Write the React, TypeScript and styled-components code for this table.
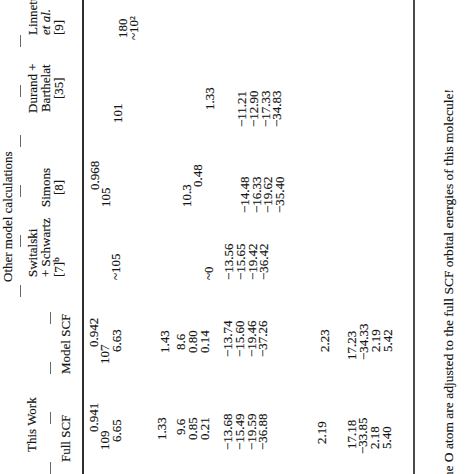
import React from 'react';
import styled, { createGlobalStyle } from 'styled-components';

const GlobalStyle = createGlobalStyle`
  html, body {
    margin: 0;
    padding: 0;
    background: #ffffff;
  }
  body {
    overflow: hidden;
  }
`;

const Frame = styled.div`
  width: 474px;
  height: 474px;
  overflow: hidden;
  background: #ffffff;
`;

// the scanned page is turned a quarter turn, so the table is laid out upright and rotated
const Sheet = styled.div`
  width: 474px;
  height: 474px;
  transform: rotate(-90deg);
  transform-origin: 50% 50%;
  display: flex;
  flex-direction: column;
  font-family: "Liberation Serif", "DejaVu Serif", serif;
  font-size: 13px;
  color: #141414;
  -webkit-text-stroke: 0.15px #141414;
`;

const Header = styled.div`
  height: 82px;
  display: flex;
`;

const ThisWorkGroup = styled.div`
  width: 177px;
  display: flex;
  flex-direction: column;
  padding-top: 25px;
  box-sizing: border-box;
`;

const OtherGroup = styled.div`
  flex: 1;
  display: flex;
  flex-direction: column;
  padding-top: 1px;
`;

const GroupTitle = styled.div<{ $indent: number }>`
  line-height: 13px;
  height: 13px;
  padding-left: ${p => p.$indent}px;
  white-space: nowrap;
`;

const DashRule = styled.div<{ $width?: number; $gap: number }>`
  height: 1px;
  margin-top: ${p => p.$gap}px;
  width: ${p => (p.$width ? `${p.$width}px` : 'auto')};
  background: repeating-linear-gradient(90deg, #6a6a6a 0 12px, transparent 12px 50px);
`;

const SubHeads = styled.div`
  display: flex;
  margin-top: 8px;
`;

const SubHead = styled.div<{ $width: number; $indent: number }>`
  width: ${p => p.$width}px;
  padding-left: ${p => p.$indent}px;
  box-sizing: border-box;
  line-height: 13px;
  white-space: nowrap;
`;

const HeadCols = styled.div`
  display: flex;
  margin-top: 5px;
`;

const HeadCol = styled.div<{ $width?: number; $indent: number }>`
  width: ${p => (p.$width ? `${p.$width}px` : 'auto')};
  flex: ${p => (p.$width ? 'none' : '1')};
  padding-left: ${p => p.$indent}px;
  box-sizing: border-box;
  display: flex;
`;

const HeadLines = styled.div<{ $center?: boolean }>`
  display: flex;
  flex-direction: column;
  align-items: ${p => (p.$center ? 'center' : 'flex-start')};
`;

const HeadLine = styled.div<{ $italic?: boolean }>`
  height: 13px;
  line-height: 13px;
  white-space: nowrap;
  font-style: ${p => (p.$italic ? 'italic' : 'normal')};
`;

const Sup = styled.span`
  font-size: 9px;
  vertical-align: 4px;
  line-height: 0;
`;

const HeavyRule = styled.div`
  height: 2px;
  background: #2e2e2e;
`;

const Body = styled.div`
  height: 329px;
  display: flex;
`;

const Column = styled.div<{ $width?: number }>`
  width: ${p => (p.$width ? `${p.$width}px` : 'auto')};
  flex: ${p => (p.$width ? 'none' : '1')};
  display: flex;
  flex-direction: column;
`;

const Cell = styled.div<{ $dx: number; $dy: number }>`
  height: 12px;
  line-height: 12px;
  white-space: nowrap;
  margin-left: ${p => p.$dx}px;
  margin-top: ${p => p.$dy}px;
`;

const BottomRule = styled.div`
  height: 2px;
  background: #4a4a4a;
`;

const Footnote = styled.div`
  margin-top: 26px;
  margin-left: -8px;
  line-height: 15px;
  white-space: nowrap;
  font-size: 13.5px;
`;

type Entry = [string, number, number]; // text, left edge, row centre

const BODY_TOP = 84;

const columns: { start: number; width?: number; cells: Entry[] }[] = [
  {
    start: 0,
    width: 90,
    cells: [
      ['0.941', 42, 94],
      ['109', 24, 105],
      ['6.65', 32, 117],
      ['1.33', 34, 162],
      ['9.6', 39, 181],
      ['0.85', 34, 193],
      ['0.21', 34, 205],
      ['−13.68', 24, 228],
      ['−15.49', 24, 240],
      ['−19.59', 24, 252],
      ['−36.88', 24, 263],
      ['2.19', 30, 322],
      ['17.18', 25, 352],
      ['−33.85', 20, 363],
      ['2.18', 25, 375],
      ['5.40', 25, 387],
    ],
  },
  {
    start: 90,
    width: 87,
    cells: [
      ['0.942', 127, 94],
      ['107', 110, 105],
      ['6.63', 122, 117],
      ['1.43', 121, 165],
      ['8.6', 124, 181],
      ['0.80', 121, 193],
      ['0.14', 121, 205],
      ['−13.74', 117, 228],
      ['−15.60', 117, 240],
      ['−19.46', 117, 252],
      ['−37.26', 117, 263],
      ['2.23', 122, 325],
      ['17.23', 114, 352],
      ['−34.33', 114, 364],
      ['2.19', 122, 376],
      ['5.42', 122, 388],
    ],
  },
  {
    start: 177,
    width: 78,
    cells: [
      ['~105', 194, 116],
      ['~0', 194, 209],
      ['−13.56', 194, 229],
      ['−15.65', 194, 241],
      ['−19.42', 194, 253],
      ['−36.42', 194, 264],
    ],
  },
  {
    start: 255,
    width: 80,
    cells: [
      ['0.968', 284, 95],
      ['105', 267, 106],
      ['10.3', 267, 187],
      ['0.48', 287, 198],
      ['−14.48', 261, 245],
      ['−16.33', 261, 257],
      ['−19.62', 261, 268],
      ['−35.40', 261, 280],
    ],
  },
  {
    start: 335,
    width: 85,
    cells: [
      ['101', 351, 118],
      ['1.33', 364, 210],
      ['−11.21', 347, 242],
      ['−12.90', 347, 254],
      ['−17.33', 347, 266],
      ['−34.83', 347, 277],
    ],
  },
  {
    start: 420,
    cells: [
      ['180', 436, 123],
      ['~10²', 434, 134],
    ],
  },
];

function DataColumn({ start, width, cells }: { start: number; width?: number; cells: Entry[] }) {
  let cursor = BODY_TOP;
  return (
    <Column $width={width}>
      {cells.map(([text, left, centre]) => {
        const dy = centre - 6 - cursor;
        cursor = centre + 6;
        return (
          <Cell key={text + centre} $dx={left - start} $dy={dy}>
            {text}
          </Cell>
        );
      })}
    </Column>
  );
}

export default function App() {
  return (
    <>
      <GlobalStyle />
      <Frame>
        <Sheet>
          <Header>
            <ThisWorkGroup>
              <GroupTitle $indent={22}>This Work</GroupTitle>
              <DashRule $width={165} $gap={12} />
              <SubHeads>
                <SubHead $width={90} $indent={12}>Full SCF</SubHead>
                <SubHead $width={87} $indent={10}>Model SCF</SubHead>
              </SubHeads>
            </ThisWorkGroup>
            <OtherGroup>
              <GroupTitle $indent={15}>Other model calculations</GroupTitle>
              <DashRule $gap={6} />
              <HeadCols>
                <HeadCol $width={78} $indent={20}>
                  <HeadLines>
                    <HeadLine>Switalski</HeadLine>
                    <HeadLine>+ Schwartz</HeadLine>
                    <HeadLine>
                      [7]<Sup>b</Sup>
                    </HeadLine>
                  </HeadLines>
                </HeadCol>
                <HeadCol $width={80} $indent={12}>
                  <HeadLines $center>
                    <HeadLine />
                    <HeadLine>Simons</HeadLine>
                    <HeadLine>[8]</HeadLine>
                  </HeadLines>
                </HeadCol>
                <HeadCol $width={85} $indent={26}>
                  <HeadLines $center>
                    <HeadLine>Durand +</HeadLine>
                    <HeadLine>Barthelat</HeadLine>
                    <HeadLine>[35]</HeadLine>
                  </HeadLines>
                </HeadCol>
                <HeadCol $indent={19}>
                  <HeadLines>
                    <HeadLine>
                      Linnett<Sup>c</Sup>
                    </HeadLine>
                    <HeadLine $italic>et al.</HeadLine>
                    <HeadLine>[9]</HeadLine>
                  </HeadLines>
                </HeadCol>
              </HeadCols>
            </OtherGroup>
          </Header>
          <HeavyRule />
          <Body>
            {columns.map(col => (
              <DataColumn key={col.start} {...col} />
            ))}
          </Body>
          <BottomRule />
          <Footnote>the O atom are adjusted to the full SCF orbital energies of this molecule!</Footnote>
        </Sheet>
      </Frame>
    </>
  );
}
